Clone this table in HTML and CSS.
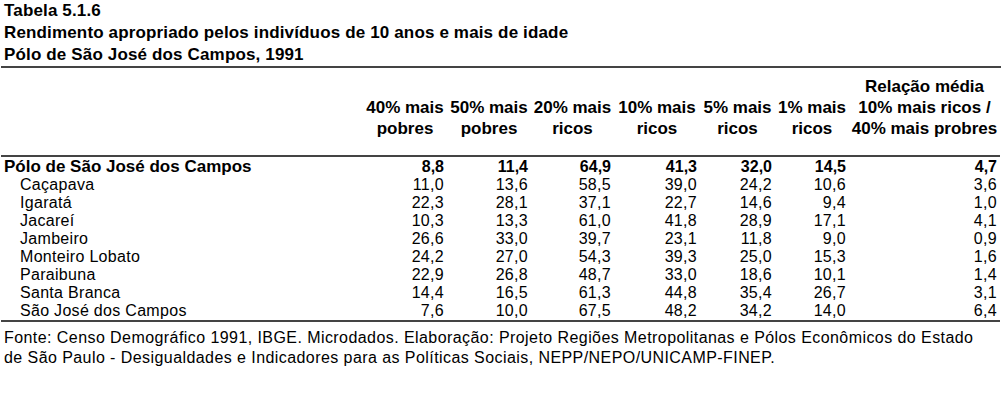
FILE: index.html
```html
<!DOCTYPE html>
<html lang="pt">
<head>
<meta charset="utf-8">
<title>Tabela 5.1.6</title>
<link rel="stylesheet" href="styles.css">
</head>
<body>
<div class="page">
  <div class="title">
    <div>Tabela 5.1.6</div>
    <div>Rendimento apropriado pelos indivíduos de 10 anos e mais de idade</div>
    <div>Pólo de São José dos Campos, 1991</div>
  </div>
  <table class="data">
    <colgroup>
      <col class="c-label">
      <col class="c1"><col class="c2"><col class="c3"><col class="c4"><col class="c5"><col class="c6"><col class="c7">
    </colgroup>
    <thead>
      <tr>
        <th></th>
        <th>40% mais<br>pobres</th>
        <th>50% mais<br>pobres</th>
        <th>20% mais<br>ricos</th>
        <th>10% mais<br>ricos</th>
        <th>5% mais<br>ricos</th>
        <th>1% mais<br>ricos</th>
        <th class="last">Relação média<br>10% mais ricos /<br>40% mais probres</th>
      </tr>
    </thead>
    <tbody>
      <tr class="total"><td>Pólo de São José dos Campos</td><td>8,8</td><td>11,4</td><td>64,9</td><td>41,3</td><td>32,0</td><td>14,5</td><td>4,7</td></tr>
      <tr><td>Caçapava</td><td>11,0</td><td>13,6</td><td>58,5</td><td>39,0</td><td>24,2</td><td>10,6</td><td>3,6</td></tr>
      <tr><td>Igaratá</td><td>22,3</td><td>28,1</td><td>37,1</td><td>22,7</td><td>14,6</td><td>9,4</td><td>1,0</td></tr>
      <tr><td>Jacareí</td><td>10,3</td><td>13,3</td><td>61,0</td><td>41,8</td><td>28,9</td><td>17,1</td><td>4,1</td></tr>
      <tr><td>Jambeiro</td><td>26,6</td><td>33,0</td><td>39,7</td><td>23,1</td><td>11,8</td><td>9,0</td><td>0,9</td></tr>
      <tr><td>Monteiro Lobato</td><td>24,2</td><td>27,0</td><td>54,3</td><td>39,3</td><td>25,0</td><td>15,3</td><td>1,6</td></tr>
      <tr><td>Paraibuna</td><td>22,9</td><td>26,8</td><td>48,7</td><td>33,0</td><td>18,6</td><td>10,1</td><td>1,4</td></tr>
      <tr><td>Santa Branca</td><td>14,4</td><td>16,5</td><td>61,3</td><td>44,8</td><td>35,4</td><td>26,7</td><td>3,1</td></tr>
      <tr class="lastrow"><td>São José dos Campos</td><td>7,6</td><td>10,0</td><td>67,5</td><td>48,2</td><td>34,2</td><td>14,0</td><td>6,4</td></tr>
    </tbody>
  </table>
  <p class="source">Fonte: Censo Demográfico 1991, IBGE. Microdados. Elaboração: Projeto Regiões Metropolitanas e Pólos Econômicos do Estado<br>de São Paulo - Desigualdades e Indicadores para as Políticas Sociais, NEPP/NEPO/UNICAMP-FINEP.</p>
</div>
</body>
</html>
```

FILE: styles.css
```css
html, body {
  margin: 0;
  padding: 0;
  background: #ffffff;
  color: #000000;
}

.page {
  width: 1000px;
  padding-left: 1px;
}

.title {
  font-family: "Liberation Sans", Arial, sans-serif;
  font-weight: bold;
  font-size: 17px;
  letter-spacing: 0.15px;
  line-height: 22px;
  padding-left: 3px;
  border-bottom: 2px solid #444444;
}

.data {
  width: 999px;
  border-collapse: collapse;
  table-layout: fixed;
  font-family: "Liberation Sans", Arial, sans-serif;
  font-size: 16px;
  letter-spacing: 0.3px;
}

.c-label { width: 362px; }
.c1 { width: 84px; }
.c2 { width: 84px; }
.c3 { width: 83px; }
.c4 { width: 86px; }
.c5 { width: 75px; }
.c6 { width: 74px; }
.c7 { width: 151px; }

.data thead th {
  font-family: "Liberation Sans", Arial, sans-serif;
  font-weight: bold;
  font-size: 17px;
  letter-spacing: 0;
  line-height: 21px;
  text-align: center;
  vertical-align: bottom;
  padding: 8px 2px 16px 2px;
  border-bottom: 2px solid #444444;
  white-space: nowrap;
}

.data tbody td {
  line-height: 18px;
  padding: 0 3px 0 0;
  text-align: right;
  white-space: nowrap;
}

.data tbody td:first-child {
  text-align: left;
  padding-left: 19px;
}

.data tbody tr:first-child td {
  padding-top: 1px;
}

.data tbody tr.total td {
  font-weight: bold;
  font-size: 16px;
  letter-spacing: 0;
}

.data tbody tr.total td:first-child {
  padding-left: 3px;
  font-size: 17px;
}

.data tbody tr.lastrow td {
  border-bottom: 2px solid #444444;
}

.source {
  margin: 0;
  padding: 6px 0 0 3px;
  font-family: "Liberation Sans", Arial, sans-serif;
  font-size: 16px;
  letter-spacing: 0.43px;
  line-height: 20px;
  white-space: nowrap;
}
```
